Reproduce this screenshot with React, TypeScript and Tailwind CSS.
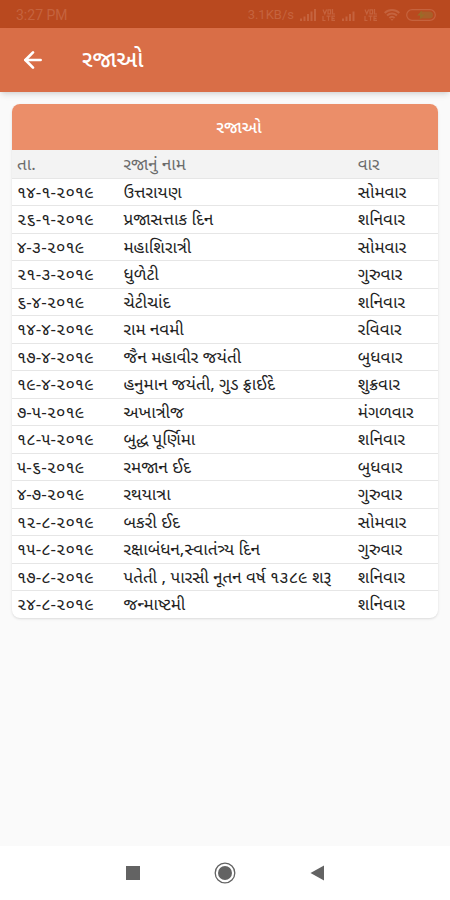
import { ArrowLeft } from 'lucide-react';

const holidays = [
  { date: '૧૪-૧-૨૦૧૯', name: 'ઉત્તરાયણ', day: 'સોમવાર' },
  { date: '૨૬-૧-૨૦૧૯', name: 'પ્રજાસત્તાક દિન', day: 'શનિવાર' },
  { date: '૪-૩-૨૦૧૯', name: 'મહાશિરાત્રી', day: 'સોમવાર' },
  { date: '૨૧-૩-૨૦૧૯', name: 'ધુળેટી', day: 'ગુરુવાર' },
  { date: '૬-૪-૨૦૧૯', name: 'ચેટીચાંદ', day: 'શનિવાર' },
  { date: '૧૪-૪-૨૦૧૯', name: 'રામ નવમી', day: 'રવિવાર' },
  { date: '૧૭-૪-૨૦૧૯', name: 'જૈન મહાવીર જયંતી', day: 'બુધવાર' },
  { date: '૧૯-૪-૨૦૧૯', name: 'હનુમાન જયંતી, ગુડ ફ્રાઈદે', day: 'શુક્રવાર' },
  { date: '૭-૫-૨૦૧૯', name: 'અખાત્રીજ', day: 'મંગળવાર' },
  { date: '૧૮-૫-૨૦૧૯', name: 'બુદ્ધ પૂર્ણિમા', day: 'શનિવાર' },
  { date: '૫-૬-૨૦૧૯', name: 'રમજાન ઈદ', day: 'બુધવાર' },
  { date: '૪-૭-૨૦૧૯', name: 'રથયાત્રા', day: 'ગુરુવાર' },
  { date: '૧૨-૮-૨૦૧૯', name: 'બકરી ઈદ', day: 'સોમવાર' },
  { date: '૧૫-૮-૨૦૧૯', name: 'રક્ષાબંધન,સ્વાતંત્ર્ય દિન', day: 'ગુરુવાર' },
  { date: '૧૭-૮-૨૦૧૯', name: 'પતેતી , પારસી નૂતન વર્ષ ૧૩૮૯ શરૂ', day: 'શનિવાર' },
  { date: '૨૪-૮-૨૦૧૯', name: 'જન્માષ્ટમી', day: 'શનિવાર' },
];

function SignalIcon() {
  return (
    <svg viewBox="0 0 16 12" className="h-3 w-4" fill="currentColor" aria-hidden="true">
      <rect x="0" y="9.5" width="2" height="2.5" />
      <rect x="3.5" y="7.5" width="2" height="4.5" />
      <rect x="7" y="5" width="2" height="7" />
      <rect x="10.5" y="2.5" width="2" height="9.5" />
      <rect x="14" y="0" width="2" height="12" />
    </svg>
  );
}

// second SIM, one bar short
function WeakSignalIcon() {
  return (
    <svg viewBox="0 0 16 12" className="h-3 w-4" fill="currentColor" aria-hidden="true">
      <rect x="0" y="9.5" width="2" height="2.5" />
      <rect x="3.5" y="7.5" width="2" height="4.5" />
      <rect x="7" y="5" width="2" height="7" />
      <rect x="10.5" y="2.5" width="2" height="9.5" />
    </svg>
  );
}

function VolteIcon() {
  return (
    <svg viewBox="0 0 14 12" className="h-3 w-3.5" fill="none" stroke="currentColor" strokeWidth="1.2" aria-hidden="true">
      <path d="M1 0.5L2.8 5L4.6 0.5M6 0.8h2.6v4H6zM10.5 0v5H13" />
      <path d="M1 7v4.5h2.5M4.5 7.2h4M6.5 7.2v4.5M13 7.2h-3v4.2h3M10 9.3h2.5" />
    </svg>
  );
}

function WifiIcon() {
  return (
    <svg viewBox="0 0 16 12" className="h-3 w-4" fill="none" stroke="currentColor" strokeWidth="2" aria-hidden="true">
      <path d="M0.6 4C4.8 0 11.2 0 15.4 4M3 6.5c2.9-2.7 7.1-2.7 10 0M5.4 9c1.5-1.4 3.7-1.4 5.2 0" />
      <path d="M6.5 10L8 12l1.5-2z" fill="currentColor" stroke="none" />
    </svg>
  );
}

function BatteryIcon() {
  return (
    <svg viewBox="0 0 30 12" className="h-3 w-[30px]" fill="none" aria-hidden="true">
      <rect x="0.7" y="0.7" width="28.6" height="10.6" rx="5.3" stroke="currentColor" strokeWidth="1.2" />
      <path d="M14 2.5h9.5a3.5 3.5 0 0 1 0 7H14z" fill="#a8602a" />
      <path d="M16 1.5L11 6.5h3.5L13.5 10.5L19 5.3h-3.5z" fill="#9a6c28" />
    </svg>
  );
}

function StatusBar() {
  return (
    <div className="flex h-7 items-center justify-between bg-[#b9491f] pl-4 pr-3.5 pt-0.5 text-[#c5633e]">
      <span className="text-sm">3:27 PM</span>
      <div className="flex items-center gap-1.5">
        <span className="text-[13px]">3.1KB/s</span>
        <SignalIcon />
        <VolteIcon />
        <WeakSignalIcon />
        <VolteIcon />
        <WifiIcon />
        <BatteryIcon />
      </div>
    </div>
  );
}

function NavigationBar() {
  return (
    <nav className="flex h-[54px] items-center justify-center gap-[70px] bg-white text-[#636363]">
      <button type="button" aria-label="Recent apps" className="flex w-[22px] justify-center">
        <svg viewBox="0 0 14 14" className="size-3.5" fill="currentColor">
          <rect width="14" height="14" />
        </svg>
      </button>
      <button type="button" aria-label="Home" className="flex w-[22px] justify-center">
        <svg viewBox="0 0 22 22" className="size-[22px]" fill="none">
          <circle cx="11" cy="11" r="9.8" stroke="currentColor" strokeWidth="1.3" />
          <circle cx="11" cy="11" r="7" fill="currentColor" />
        </svg>
      </button>
      <button type="button" aria-label="Back" className="flex w-[22px] justify-center">
        <svg viewBox="0 0 14 16" className="h-4 w-3.5" fill="currentColor">
          <path d="M14 0.5v15L0.5 8z" />
        </svg>
      </button>
    </nav>
  );
}

export default function App() {
  return (
    <div className="flex min-h-screen flex-col bg-[#fafafa] font-['Roboto','Noto_Sans_Gujarati','Noto_Sans',sans-serif]">
      <StatusBar />
      <header className="flex h-16 items-center gap-9 bg-[#d96e47] px-5 text-white shadow-md">
        <button type="button" aria-label="Back">
          <ArrowLeft className="size-[26px]" strokeWidth={2.5} />
        </button>
        <h1 className="text-[23px] font-medium">રજાઓ</h1>
      </header>

      <main className="flex-1 px-3 pt-3">
        <section className="overflow-hidden rounded-lg bg-white shadow">
          <h2 className="flex h-[46px] items-center justify-center bg-[#eb8e69] pl-7 pt-0.5 text-[17px] font-medium text-white">
            રજાઓ
          </h2>
          <table className="w-full table-fixed text-left font-['Noto_Sans','Noto_Sans_Gujarati',sans-serif] text-[17px] leading-5 text-[#222]">
            <thead>
              <tr className="h-7 border-b border-[#e6e6e6] bg-[#f3f3f3] text-[#6b6b6b]">
                <th className="w-1/4 p-0 pl-[5px] font-normal">તા.</th>
                <th className="w-[55%] p-0 pl-[5px] font-normal">રજાનું નામ</th>
                <th className="w-1/5 p-0 pl-[5px] font-normal">વાર</th>
              </tr>
            </thead>
            <tbody>
              {holidays.map((holiday) => (
                <tr key={holiday.date} className="h-7 border-b border-[#e6e6e6] odd:h-[27px] last:border-b-0">
                  <td className="p-0 pl-[5px] whitespace-nowrap">{holiday.date}</td>
                  <td className="p-0 pl-[5px] whitespace-nowrap">{holiday.name}</td>
                  <td className="p-0 pl-[5px] whitespace-nowrap">{holiday.day}</td>
                </tr>
              ))}
            </tbody>
          </table>
        </section>
      </main>

      <NavigationBar />
    </div>
  );
}
